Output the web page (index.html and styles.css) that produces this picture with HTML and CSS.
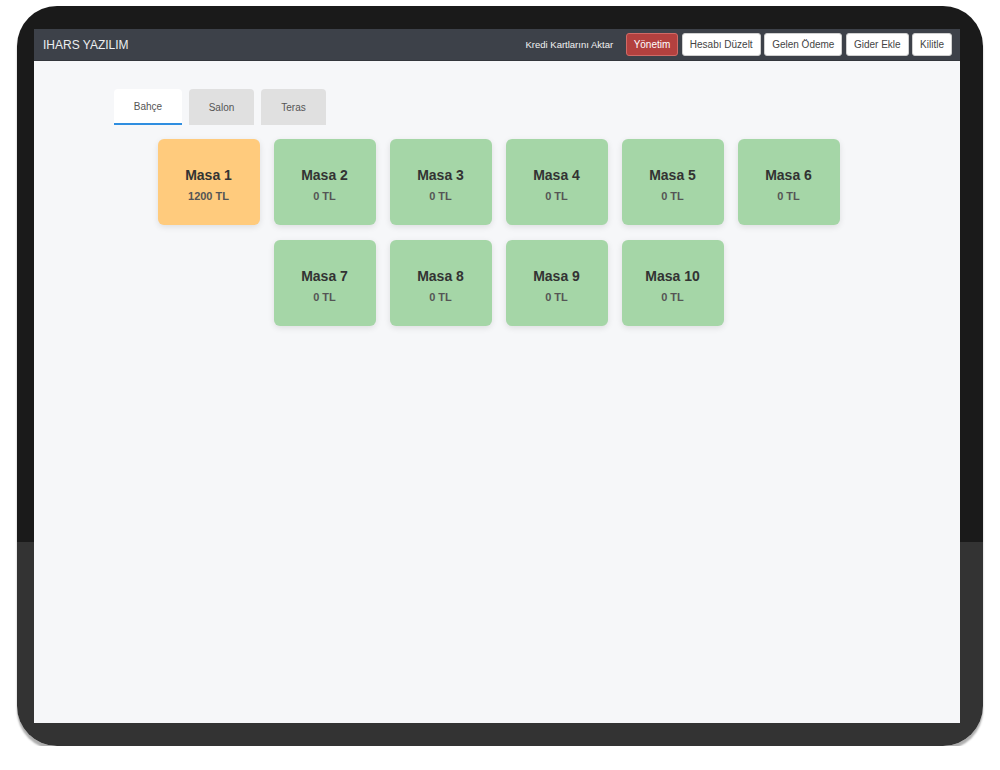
FILE: index.html
```html
<!DOCTYPE html>
<html lang="tr">
<head>
<meta charset="utf-8">
<title>IHARS YAZILIM</title>
<link rel="stylesheet" href="styles.css">
</head>
<body>
<div class="device">
  <div class="screen">
    <header class="topbar">
      <div class="brand">IHARS YAZILIM</div>
      <nav class="actions">
        <span class="link">Kredi Kartlarını Aktar</span>
        <button class="btn btn-danger">Yönetim</button>
        <button class="btn">Hesabı Düzelt</button>
        <button class="btn">Gelen Ödeme</button>
        <button class="btn">Gider Ekle</button>
        <button class="btn">Kilitle</button>
      </nav>
    </header>
    <main class="content">
      <div class="tabs">
        <div class="tab active">Bahçe</div>
        <div class="tab">Salon</div>
        <div class="tab">Teras</div>
      </div>
      <div class="tables">
        <div class="table busy"><div class="name">Masa 1</div><div class="amount">1200 TL</div></div>
        <div class="table"><div class="name">Masa 2</div><div class="amount">0 TL</div></div>
        <div class="table"><div class="name">Masa 3</div><div class="amount">0 TL</div></div>
        <div class="table"><div class="name">Masa 4</div><div class="amount">0 TL</div></div>
        <div class="table"><div class="name">Masa 5</div><div class="amount">0 TL</div></div>
        <div class="table"><div class="name">Masa 6</div><div class="amount">0 TL</div></div>
        <div class="table"><div class="name">Masa 7</div><div class="amount">0 TL</div></div>
        <div class="table"><div class="name">Masa 8</div><div class="amount">0 TL</div></div>
        <div class="table"><div class="name">Masa 9</div><div class="amount">0 TL</div></div>
        <div class="table"><div class="name">Masa 10</div><div class="amount">0 TL</div></div>
      </div>
    </main>
  </div>
</div>
</body>
</html>
```
FILE: styles.css
```css
* { box-sizing: border-box; }
html, body {
  margin: 0;
  padding: 0;
  background: #ffffff;
  font-family: "Liberation Sans", Arial, sans-serif;
}
body {
  padding: 6px 0 0 17px;
}
.device {
  width: 966px;
  height: 740px;
  border-radius: 40px;
  padding: 23px 23px 23px 17px;
  background: linear-gradient(to bottom, #1a1a1a 0, #1a1a1a 536px, #333333 536px, #333333 100%);
  box-shadow: 0 4px 2px rgba(0, 0, 0, 0.32);
}
.screen {
  width: 926px;
  height: 694px;
  background: #f6f7f9;
  display: flex;
  flex-direction: column;
}
.topbar {
  height: 32px;
  background: #3d4149;
  display: flex;
  align-items: center;
  justify-content: space-between;
  padding: 0 8px 0 9px;
  border-bottom: 1px solid #33363c;
}
.brand {
  color: #eceef0;
  font-size: 12px;
}
.actions {
  display: flex;
  align-items: center;
  gap: 3.5px;
}
.link {
  color: #f2f2f2;
  font-size: 9.5px;
  margin-right: 9px;
}
.btn {
  font-family: "Liberation Sans", Arial, sans-serif;
  font-size: 10px;
  height: 23px;
  padding: 0 7px;
  background: #ffffff;
  color: #444;
  border: 1px solid #d0d0d0;
  border-radius: 3px;
}
.btn-danger {
  background: #b3413f;
  color: #fff;
  border-color: #d06a66;
}
.content {
  padding: 28px 0 0 80px;
}
.tabs {
  display: flex;
  gap: 7px;
}
.tab {
  width: 65px;
  height: 36px;
  display: flex;
  align-items: center;
  justify-content: center;
  font-size: 10px;
  color: #555;
  background: #e0e0e0;
  border-radius: 4px 4px 0 0;
}
.tab.active {
  width: 68px;
  background: #ffffff;
  border-bottom: 2px solid #2f8ee0;
}
.tables {
  display: flex;
  flex-wrap: wrap;
  justify-content: center;
  gap: 15px 14px;
  margin: 14px 0 0 -80px;
  padding: 0 112px 0 115px;
}
.table {
  width: 102px;
  height: 86px;
  background: #a5d6a7;
  border-radius: 6px;
  box-shadow: 0 2px 6px rgba(0, 0, 0, 0.1);
  display: flex;
  flex-direction: column;
  align-items: center;
  justify-content: center;
}
.table.busy {
  background: #ffcb7d;
}
.name {
  font-size: 14px;
  font-weight: bold;
  color: #333;
  margin-top: 4px;
}
.amount {
  font-size: 11px;
  font-weight: bold;
  color: #555;
  margin-top: 7px;
}
```
